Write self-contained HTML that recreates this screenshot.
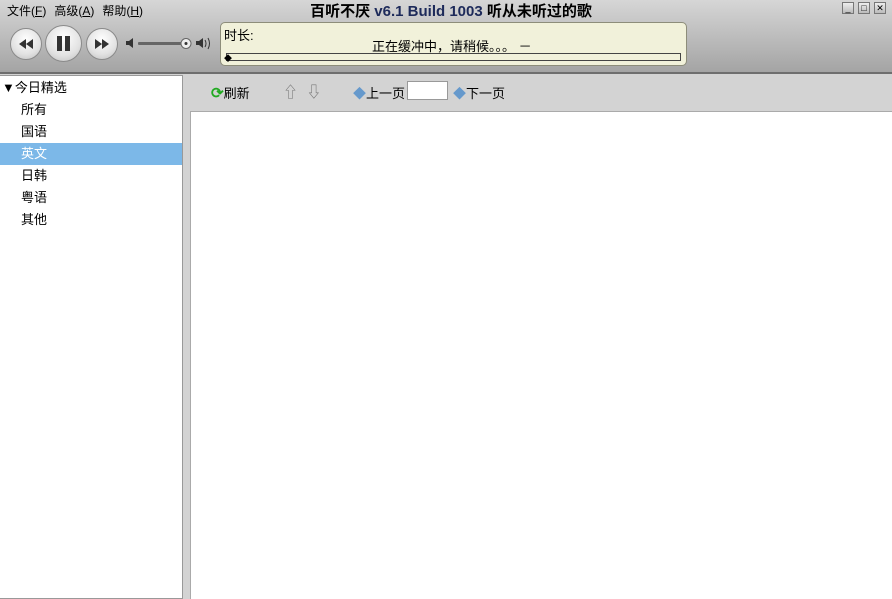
<!DOCTYPE html>
<html><head><meta charset="utf-8"><style>
*{margin:0;padding:0;box-sizing:border-box}
body{width:892px;height:599px;overflow:hidden;position:relative;font-family:"Liberation Sans","Noto Sans CJK SC",sans-serif;font-size:12px;color:#000;background:#d3d3d3}
.hdr{position:absolute;left:0;top:0;width:892px;height:74px;background:linear-gradient(#d6d6d6,#a4a4a4);border-bottom:2px solid #6e6e6e}
.menu{position:absolute;top:2px;left:7px;font-size:12px}
.menu span{margin-right:8px}
.title{position:absolute;top:0;left:0;width:892px;text-align:center;font-weight:bold;font-size:15px;padding-left:10px}
.title b{color:#1d2a5a}
.btn{position:absolute;border-radius:50%;background:radial-gradient(circle at 50% 35%,#fff,#e2e2e2 60%,#bdbdbd);border:1px solid #8a8a8a}
.win{position:absolute;top:2px;width:12px;height:12px;border:1px solid #777;background:linear-gradient(#eee,#bbb);font-size:9px;line-height:10px;text-align:center}
.lcd{position:absolute;left:220px;top:22px;width:467px;height:44px;background:#f1f1da;border:1px solid #8d8d7a;border-radius:5px;font-size:13px}
.left{position:absolute;left:0;top:75px;width:183px;height:524px;background:#fff;border:1px solid #999;border-left:none}
.left div{height:22px;line-height:22px;padding-left:21px;font-size:13px}
.content{position:absolute;left:190px;top:111px;width:702px;height:488px;background:#fff;border-top:1px solid #aaa;border-left:1px solid #aaa}
.tb{position:absolute;top:83px;font-size:13px}
</style></head><body>
<div class="hdr">
<div class="menu"><span>文件(<u>F</u>)</span><span>高级(<u>A</u>)</span><span>帮助(<u>H</u>)</span></div>
<div class="title">百听不厌 <b>v6.1 Build 1003</b> 听从未听过的歌</div>
<div class="win" style="left:842px">_</div><div class="win" style="left:858px">□</div><div class="win" style="left:874px">✕</div>
<div class="btn" style="left:10px;top:28px;width:32px;height:32px"><svg width="30" height="30"><path d="M8 15l7-5v10z M15 15l7-5v10z" fill="#333"/></svg></div>
<div class="btn" style="left:45px;top:25px;width:37px;height:37px"><svg width="35" height="35"><rect x="11" y="10" width="5" height="15" fill="#333"/><rect x="19" y="10" width="5" height="15" fill="#333"/></svg></div>
<div class="btn" style="left:86px;top:28px;width:32px;height:32px"><svg width="30" height="30"><path d="M8 10l7 5-7 5z M15 10l7 5-7 5z" fill="#333"/></svg></div>
<svg style="position:absolute;left:124px;top:35px" width="90" height="16"><path d="M2 6h3l4-3v10l-4-3H2z" fill="#333"/><rect x="14" y="7" width="50" height="3" rx="1" fill="#666"/><circle cx="62" cy="8.5" r="5" fill="#eee" stroke="#666"/><circle cx="62" cy="8.5" r="1.5" fill="#333"/><path d="M72 6h3l4-3v10l-4-3h-3z" fill="#333"/><path d="M81 5q2 3.5 0 7M84 3q3 5.5 0 11" stroke="#333" fill="none"/></svg>
<div class="lcd"><div style="position:absolute;left:3px;top:2px">时长:</div><div style="position:absolute;left:151px;top:13px">正在缓冲中，请稍候。。。 －</div><div style="position:absolute;left:5px;top:30px;width:455px;height:8px;border:1px solid #444"></div><div style="position:absolute;left:3px;top:30px;font-size:8px">◆</div></div>
</div>
<div class="left">
<div style="padding-left:2px;margin-top:1px">▼今日精选</div>
<div>所有</div><div>国语</div><div style="background:#7cb8e8;color:#fff">英文</div><div>日韩</div><div>粤语</div><div>其他</div>
</div>
<div class="tb" style="left:211px"><span style="color:#2a2;font-weight:bold;font-size:15px">⟳</span>刷新</div>
<div class="tb" style="left:283px;color:#777;font-size:15px;top:81px">⇧ &nbsp;⇩</div>
<div class="tb" style="left:353px"><span style="color:#69c">◆</span>上一页</div>
<div style="position:absolute;left:407px;top:81px;width:41px;height:19px;background:#fff;border:1px solid #999"></div>
<div class="tb" style="left:453px"><span style="color:#69c">◆</span>下一页</div>
<div class="content"></div>
</body></html>
